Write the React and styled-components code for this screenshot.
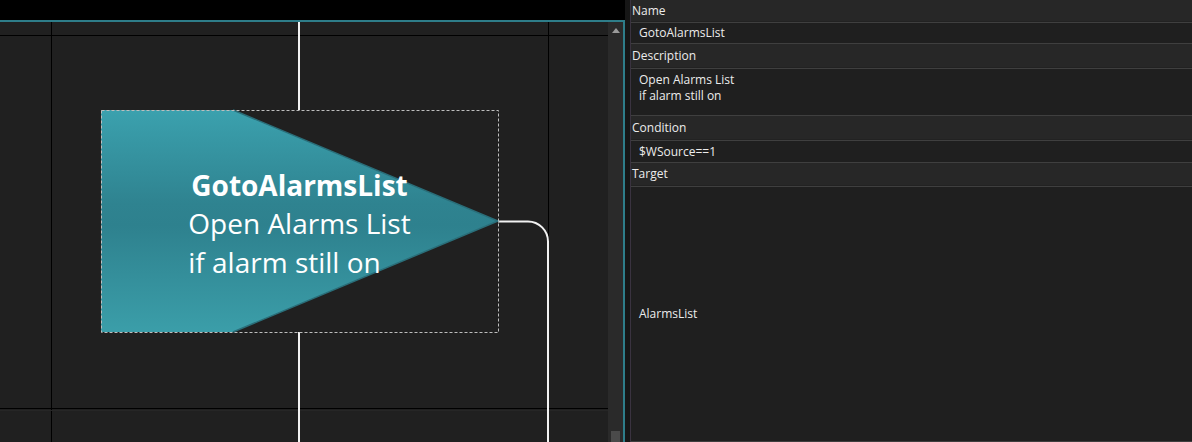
import React from 'react';
import styled, { createGlobalStyle } from 'styled-components';

const GlobalStyle = createGlobalStyle`
  html, body {
    margin: 0;
    padding: 0;
    background: #000;
    overflow: hidden;
  }
  * {
    box-sizing: border-box;
  }
`;

// Whole window: diagram on the left, properties on the right
const Page = styled.div`
  display: flex;
  flex-direction: row;
  width: 1192px;
  height: 442px;
  background: #000;
  font-family: "Open Sans", "Noto Sans", sans-serif;
`;

const CanvasPane = styled.div`
  display: flex;
  flex-direction: column;
  width: 625px;
  flex-shrink: 0;
`;

const TopStrip = styled.div`
  height: 20px;
  background: #000;
`;

const CanvasBody = styled.div`
  flex: 1;
  display: flex;
  flex-direction: row;
  border-top: 2px solid #2e7d89;
  border-right: 2px solid #2e7d89;
`;

const Diagram = styled.div`
  position: relative;
  width: 608px;
  background: #202020;
  overflow: hidden;

  svg {
    display: block;
  }
`;

const NodeText = styled.div`
  position: absolute;
  left: ${(p) => p.x}px;
  top: ${(p) => p.y}px;
  width: ${(p) => p.w}px;
  height: ${(p) => p.h}px;
  display: flex;
  align-items: center;
  justify-content: center;
  padding-top: 5px;
  color: #fff;
  font-size: 28px;
  line-height: 38.5px;
  pointer-events: none;
`;

const NodeLines = styled.div`
  text-align: left;
  white-space: nowrap;
`;

const NodeTitle = styled.div`
  font-weight: 700;
  text-align: center;
`;

const Scrollbar = styled.div`
  width: 15px;
  background: #2a2a2a;
  display: flex;
  flex-direction: column;
  align-items: center;
  justify-content: space-between;
  padding: 6px 0 0;
`;

const ArrowUp = styled.div`
  width: 0;
  height: 0;
  border-left: 4px solid transparent;
  border-right: 4px solid transparent;
  border-bottom: 5px solid #9a9a9a;
`;

const Thumb = styled.div`
  width: 9px;
  height: 11px;
  background: #4a4a4a;
`;

const Splitter = styled.div`
  width: 5px;
  flex-shrink: 0;
  background: #161616;
`;

const PropertyPanel = styled.div`
  flex: 1;
  display: flex;
  flex-direction: column;
  border-left: 1px solid #3a3340;
  background: #262626;
  color: #ececec;
  font-size: 12px;
`;

const Label = styled.div`
  height: ${(p) => p.h}px;
  display: flex;
  align-items: center;
  padding-left: 1px;
  padding-bottom: 1px;
  background: #272727;
  border-bottom: 1px solid #222;
`;

const Field = styled.div`
  height: ${(p) => (p.grow ? 'auto' : `${p.h}px`)};
  flex: ${(p) => (p.grow ? 1 : 'none')};
  display: flex;
  align-items: ${(p) => (p.multi ? 'flex-start' : 'center')};
  padding: ${(p) => (p.multi ? '3px 8px' : '0 8px')};
  background: #1f1f1f;
  border-top: 1px solid #3f3f3f;
  border-bottom: 1px solid #3f3f3f;
  line-height: 16px;
  white-space: pre-line;
`;

const Diagramme = () => (
  <Diagram>
    <svg width="608" height="420" viewBox="0 0 608 420">
      <defs>
        <linearGradient id="nodeFill" x1="0" y1="0" x2="0" y2="1">
          <stop offset="0" stopColor="#3ba1ae" />
          <stop offset="0.42" stopColor="#2f8390" />
          <stop offset="0.52" stopColor="#2e818e" />
          <stop offset="1" stopColor="#3b9ea9" />
        </linearGradient>
      </defs>
      {/* grid */}
      <line x1="51.5" y1="0" x2="51.5" y2="420" stroke="#000" />
      <line x1="548.5" y1="0" x2="548.5" y2="420" stroke="#000" />
      <line x1="0" y1="13.5" x2="608" y2="13.5" stroke="#000" />
      <line x1="0" y1="386.5" x2="608" y2="386.5" stroke="#000" />
      <line x1="0" y1="388.5" x2="608" y2="388.5" stroke="#262626" />
      {/* connectors */}
      <line x1="299" y1="0" x2="299" y2="88" stroke="#f2f2f2" strokeWidth="2" />
      <line x1="299" y1="310" x2="299" y2="420" stroke="#f2f2f2" strokeWidth="2" />
      <path d="M498 199.5 H528 A20 20 0 0 1 548 219.5 V420" fill="none" stroke="#f2f2f2" strokeWidth="2" />
      {/* node */}
      <polygon points="101,88 233,88 498,199 233,310 101,310" fill="url(#nodeFill)" />
      <polyline points="233,88 498,199 233,310" fill="none" stroke="#2a6e79" strokeWidth="1.5" />
      <rect x="101.5" y="88.5" width="397" height="222" fill="none" stroke="#bdbdbd" strokeDasharray="3 2" />
    </svg>
    <NodeText x={101} y={88} w={397} h={222}>
      <NodeLines>
        <NodeTitle>GotoAlarmsList</NodeTitle>
        <div>Open Alarms List</div>
        <div>if alarm still on</div>
      </NodeLines>
    </NodeText>
  </Diagram>
);

const App = () => (
  <Page>
    <GlobalStyle />
    <CanvasPane>
      <TopStrip />
      <CanvasBody>
        <Diagramme />
        <Scrollbar>
          <ArrowUp />
          <Thumb />
        </Scrollbar>
      </CanvasBody>
    </CanvasPane>
    <Splitter />
    <PropertyPanel>
      <Label h={22}>Name</Label>
      <Field h={22}>GotoAlarmsList</Field>
      <Label h={24}>Description</Label>
      <Field h={48} multi>{'Open Alarms List\nif alarm still on'}</Field>
      <Label h={24}>Condition</Label>
      <Field h={23}>$WSource==1</Field>
      <Label h={23}>Target</Label>
      <Field grow>AlarmsList</Field>
    </PropertyPanel>
  </Page>
);

export default App;
